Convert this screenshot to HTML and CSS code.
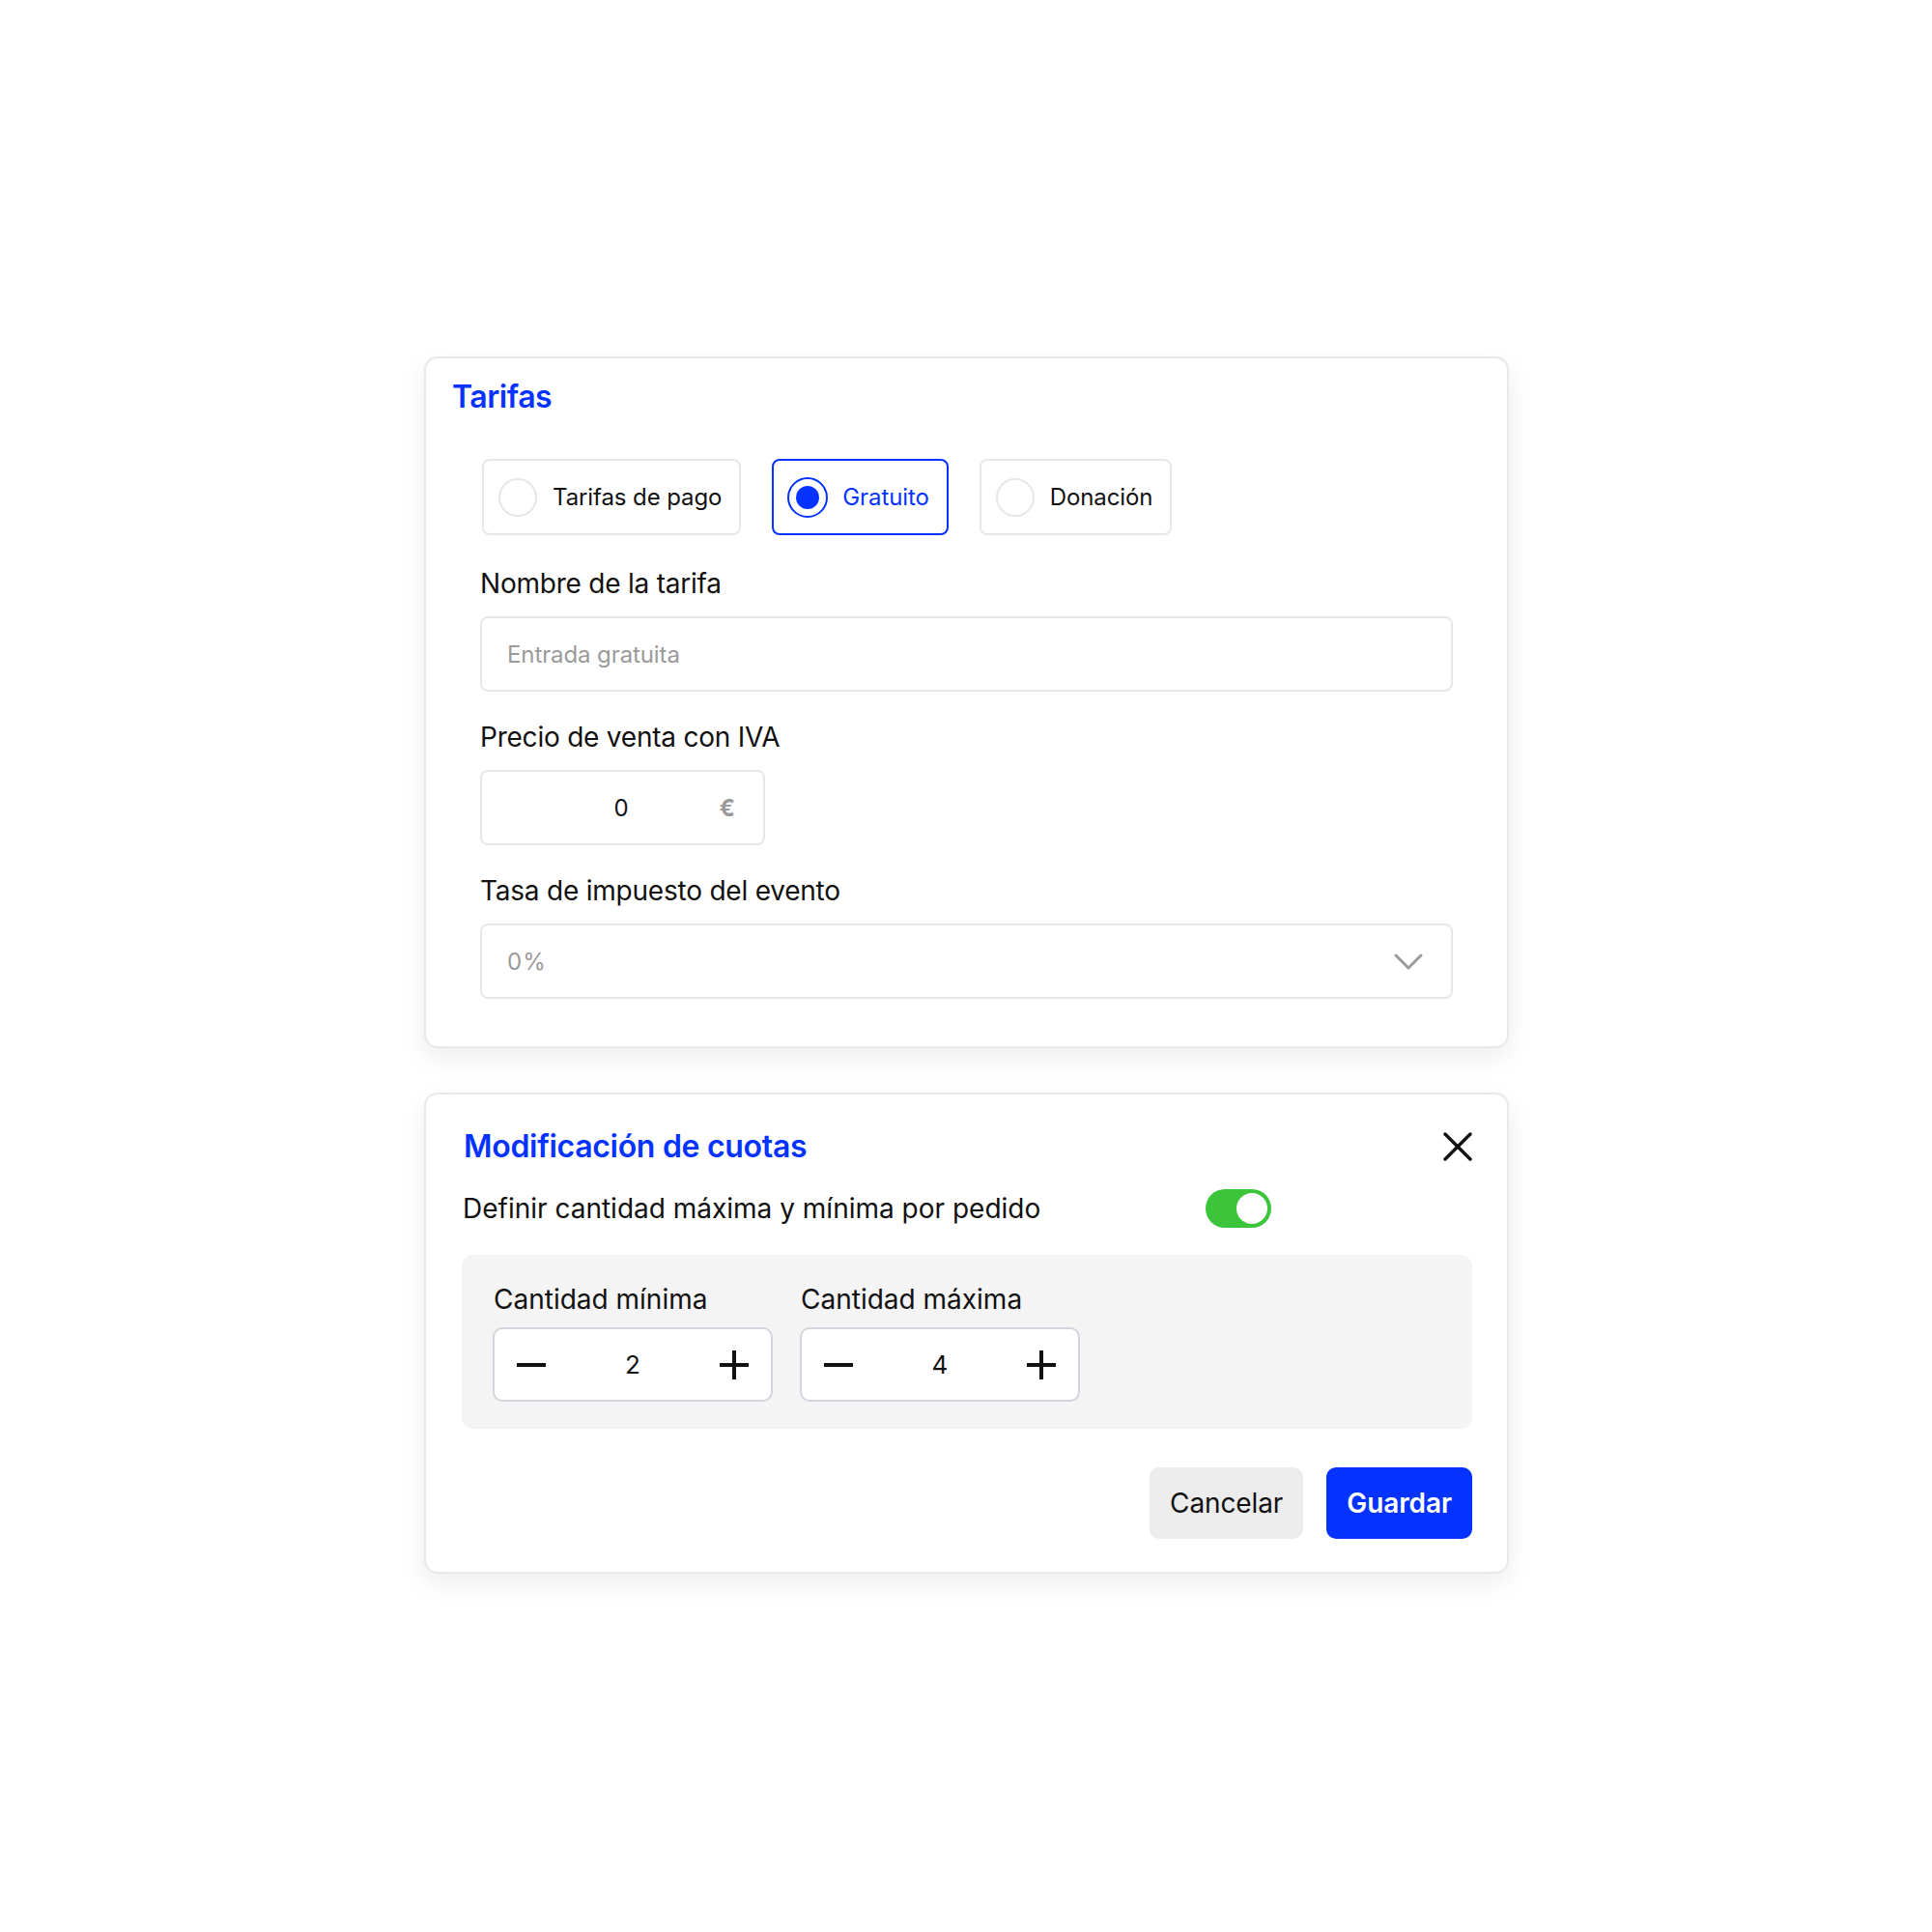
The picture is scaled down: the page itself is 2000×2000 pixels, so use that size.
FILE: index.html
```html
<!DOCTYPE html>
<html lang="es">
<head>
<meta charset="utf-8">
<title>Tarifas</title>
<link rel="stylesheet" href="styles.css">
</head>
<body>
<main class="page">
  <section class="card card-tarifas">
    <h2 class="card-title">Tarifas</h2>
    <div class="form-body">
      <div class="radio-row">
        <label class="radio-option">
          <span class="radio-circle"></span>
          <span class="radio-label">Tarifas de pago</span>
        </label>
        <label class="radio-option is-selected">
          <span class="radio-circle"><span class="radio-dot"></span></span>
          <span class="radio-label">Gratuito</span>
        </label>
        <label class="radio-option">
          <span class="radio-circle"></span>
          <span class="radio-label">Donación</span>
        </label>
      </div>

      <div class="field field-first">
        <div class="field-label">Nombre de la tarifa</div>
        <div class="input">
          <span class="placeholder">Entrada gratuita</span>
        </div>
      </div>

      <div class="field">
        <div class="field-label">Precio de venta con IVA</div>
        <div class="input price-input">
          <span class="price-value">0</span>
          <span class="price-currency">€</span>
        </div>
      </div>

      <div class="field">
        <div class="field-label">Tasa de impuesto del evento</div>
        <div class="input select">
          <span class="placeholder placeholder-spaced">0%</span>
          <svg class="chevron" width="30" height="17" viewBox="0 0 30 17" aria-hidden="true">
            <polyline points="2,2 15,15 28,2" fill="none" stroke="#9b9b9b" stroke-width="3" stroke-linecap="round" stroke-linejoin="round"/>
          </svg>
        </div>
      </div>
    </div>
  </section>

  <section class="card card-cuotas">
    <div class="cuotas-header">
      <h2 class="card-title title-cuotas">Modificación de cuotas</h2>
      <svg class="close-icon" width="30" height="30" viewBox="0 0 30 30" aria-hidden="true">
        <line x1="2" y1="2" x2="28" y2="28" stroke="#111" stroke-width="3.4" stroke-linecap="round"/>
        <line x1="28" y1="2" x2="2" y2="28" stroke="#111" stroke-width="3.4" stroke-linecap="round"/>
      </svg>
    </div>

    <div class="toggle-row">
      <span class="toggle-text">Definir cantidad máxima y mínima por pedido</span>
      <span class="toggle"><span class="toggle-knob"></span></span>
    </div>

    <div class="quantity-box">
      <div class="quantity-col">
        <div class="field-label">Cantidad mínima</div>
        <div class="stepper">
          <svg class="step-icon" width="30" height="30" viewBox="0 0 30 30" aria-hidden="true">
            <line x1="0" y1="15" x2="30" y2="15" stroke="#111" stroke-width="4"/>
          </svg>
          <span class="stepper-value">2</span>
          <svg class="step-icon" width="30" height="30" viewBox="0 0 30 30" aria-hidden="true">
            <line x1="0" y1="15" x2="30" y2="15" stroke="#111" stroke-width="4"/>
            <line x1="15" y1="0" x2="15" y2="30" stroke="#111" stroke-width="4"/>
          </svg>
        </div>
      </div>
      <div class="quantity-col">
        <div class="field-label">Cantidad máxima</div>
        <div class="stepper">
          <svg class="step-icon" width="30" height="30" viewBox="0 0 30 30" aria-hidden="true">
            <line x1="0" y1="15" x2="30" y2="15" stroke="#111" stroke-width="4"/>
          </svg>
          <span class="stepper-value">4</span>
          <svg class="step-icon" width="30" height="30" viewBox="0 0 30 30" aria-hidden="true">
            <line x1="0" y1="15" x2="30" y2="15" stroke="#111" stroke-width="4"/>
            <line x1="15" y1="0" x2="15" y2="30" stroke="#111" stroke-width="4"/>
          </svg>
        </div>
      </div>
    </div>

    <div class="actions">
      <button class="btn btn-cancel" type="button">Cancelar</button>
      <button class="btn btn-save" type="button">Guardar</button>
    </div>
  </section>
</main>
</body>
</html>
```

FILE: styles.css
```css
* {
  box-sizing: border-box;
}

html, body {
  margin: 0;
  padding: 0;
  background: #ffffff;
}

body {
  font-family: Inter, "Noto Sans", "Liberation Sans", sans-serif;
  color: #111111;
  width: 2000px;
  min-height: 2000px;
}

.page {
  width: 1123px;
  margin: 369px 0 0 439px;
  display: flex;
  flex-direction: column;
  gap: 46px;
}

.card {
  background: #ffffff;
  border: 2px solid #e7e9ee;
  border-radius: 14px;
  box-shadow: 0 10px 26px rgba(20, 24, 40, 0.08);
}

.card-title {
  margin: 0;
  font-size: 32px;
  line-height: 40px;
  font-weight: 600;
  color: #0433ff;
  letter-spacing: -0.45px;
}

.title-cuotas {
  letter-spacing: -0.3px;
}

/* Card 1 */
.card-tarifas {
  padding: 20px 27px 49px;
}

.form-body {
  padding: 0 29px;
}

.radio-row {
  margin-top: 44px;
  display: flex;
  gap: 32px;
  padding-left: 2px;
}

.radio-option {
  height: 79px;
  display: flex;
  align-items: center;
  gap: 16px;
  padding: 0 18px 0 15px;
  border: 2px solid #e5e7ec;
  border-radius: 8px;
  background: #ffffff;
}

.radio-option.is-selected {
  border-color: #0433ff;
}

.radio-circle {
  width: 40px;
  height: 40px;
  border-radius: 50%;
  border: 2px solid #e5e7ec;
  display: flex;
  align-items: center;
  justify-content: center;
  flex: none;
}

.is-selected .radio-circle {
  width: 42px;
  height: 42px;
  margin: 0 -1px;
  border: 2.5px solid #0433ff;
}

.radio-dot {
  width: 24px;
  height: 24px;
  border-radius: 50%;
  background: #0433ff;
}

.radio-label {
  font-size: 24px;
  line-height: 30px;
  color: #111111;
  letter-spacing: -0.1px;
}

.is-selected .radio-label {
  color: #0433ff;
}

.field {
  margin-top: 29px;
}

.field-first {
  margin-top: 32px;
}

.field-label {
  font-size: 28px;
  line-height: 36px;
  color: #111111;
  margin-bottom: 16px;
  letter-spacing: -0.22px;
}

.input {
  height: 78px;
  border: 2px solid #e5e7ec;
  border-radius: 8px;
  display: flex;
  align-items: center;
  padding: 0 26px;
  background: #ffffff;
}

.placeholder {
  font-size: 24px;
  color: #9a9a9a;
  letter-spacing: -0.1px;
}

.placeholder-spaced {
  letter-spacing: 1px;
}

.price-input {
  width: 295px;
  display: grid;
  grid-template-columns: 1fr auto 1fr;
  padding: 0 29px 0 26px;
}

.price-value {
  grid-column: 2;
  font-size: 24px;
  color: #111111;
}

.price-currency {
  grid-column: 3;
  justify-self: end;
  font-size: 24px;
  font-weight: 700;
  color: #9a9a9a;
}

.select {
  justify-content: space-between;
  padding-right: 29px;
}

.chevron {
  display: block;
}

/* Card 2 */
.card-cuotas {
  padding: 34px 36px 34px 37px;
}

.cuotas-header {
  display: flex;
  align-items: center;
  justify-content: space-between;
  padding-left: 2px;
}

.close-icon {
  display: block;
}

.toggle-row {
  margin-top: 24px;
  width: 838px;
  height: 40px;
  display: flex;
  align-items: center;
  justify-content: space-between;
  padding-left: 1px;
}

.toggle-text {
  font-size: 28px;
  line-height: 36px;
}

.toggle {
  width: 68px;
  height: 40px;
  border-radius: 20px;
  background: #3cc43a;
  display: flex;
  align-items: center;
  justify-content: flex-end;
  padding-right: 4px;
}

.toggle-knob {
  width: 32px;
  height: 32px;
  border-radius: 50%;
  background: #ffffff;
}

.quantity-box {
  margin-top: 28px;
  background: #f4f4f4;
  border-radius: 12px;
  padding: 28px 32px;
  display: flex;
  gap: 28px;
}

.quantity-col .field-label {
  margin-bottom: 11px;
  padding-left: 1px;
  letter-spacing: 0;
}

.stepper {
  width: 290px;
  height: 77px;
  border: 2px solid #d3d5dd;
  border-radius: 10px;
  background: #ffffff;
  display: flex;
  align-items: center;
  justify-content: space-between;
  padding: 0 23px;
}

.step-icon {
  display: block;
}

.stepper-value {
  font-size: 26px;
  color: #111111;
}

.actions {
  margin-top: 40px;
  display: flex;
  justify-content: flex-end;
  gap: 24px;
}

.btn {
  height: 74px;
  border: none;
  border-radius: 10px;
  padding: 0 21px;
  font-family: Inter, "Noto Sans", "Liberation Sans", sans-serif;
  font-size: 28px;
  letter-spacing: -0.1px;
}

.btn-cancel {
  background: #ececec;
  color: #111111;
  font-weight: 400;
}

.btn-save {
  background: #0433ff;
  color: #ffffff;
  font-weight: 600;
}
```
